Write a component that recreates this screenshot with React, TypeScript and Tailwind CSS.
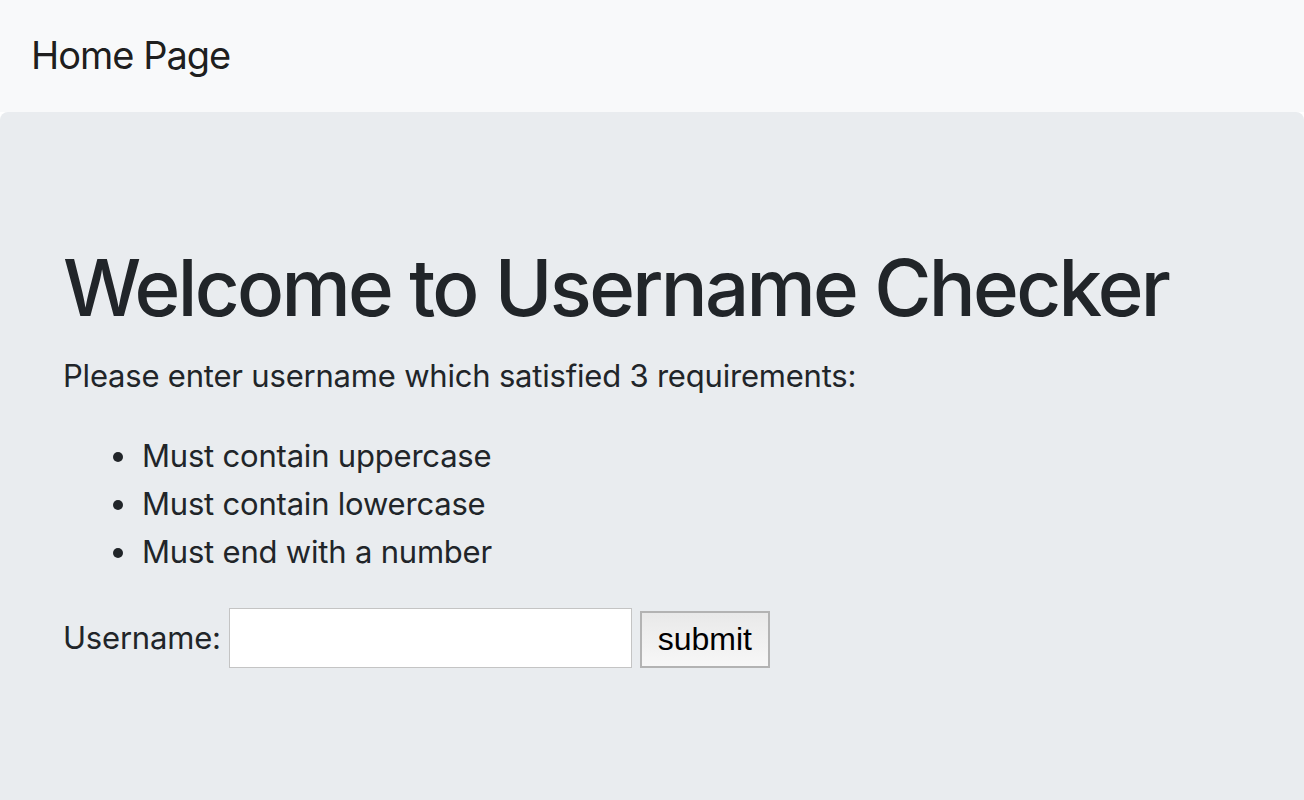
import { useState } from "react";

const requirements = [
  "Must contain uppercase",
  "Must contain lowercase",
  "Must end with a number",
];

const App = () => {
  const [username, setUsername] = useState("");

  return (
    <div className="min-h-screen bg-white font-['Inter','Noto_Sans',sans-serif] text-[#212529]">
      <nav className="flex h-[112px] items-center bg-[#f8f9fa] px-[31px]">
        <span className="pb-[2px] text-[38px] leading-[60px] tracking-[-1px] text-[#000000e6]">
          Home Page
        </span>
      </nav>
      <main className="min-h-[688px] rounded-tl-[8px] rounded-tr-[8px] bg-[#e9ecef] px-[63px] pt-[128px] pb-[64px]">
        <h1 className="mb-[16px] whitespace-nowrap text-[78px] font-medium leading-[96px] tracking-[-2.7px]">
          Welcome to Username Checker
        </h1>
        <p className="mb-[32px] text-[31px] leading-[48px] tracking-[-0.2px]">
          Please enter username which satisfied 3 requirements:
        </p>
        <ul className="mb-[32px] list-disc pl-[77px] text-[31px] leading-[48px] tracking-[-0.2px]">
          {requirements.map((req) => (
            <li key={req} className="pl-[2px]">
              {req}
            </li>
          ))}
        </ul>
        <form
          className="flex items-center"
          onSubmit={(e) => e.preventDefault()}
        >
          <label
            htmlFor="username"
            className="mr-[8px] text-[31px] leading-[48px] tracking-[-0.2px]"
          >
            Username:
          </label>
          <input
            id="username"
            value={username}
            onChange={(e) => setUsername(e.target.value)}
            className="h-[60px] w-[403px] border border-[#c4c4c4] bg-white px-2 text-[28px] outline-none"
          />
          <button
            type="submit"
            className="ml-[8px] mt-[2px] h-[57px] w-[130px] border-2 border-[#b3b3b3] bg-gradient-to-b from-[#e9e9e9] to-[#f7f7f7] font-['Liberation_Sans',Arial,sans-serif] text-[32px] text-black"
          >
            submit
          </button>
        </form>
      </main>
    </div>
  );
};

export default App;
